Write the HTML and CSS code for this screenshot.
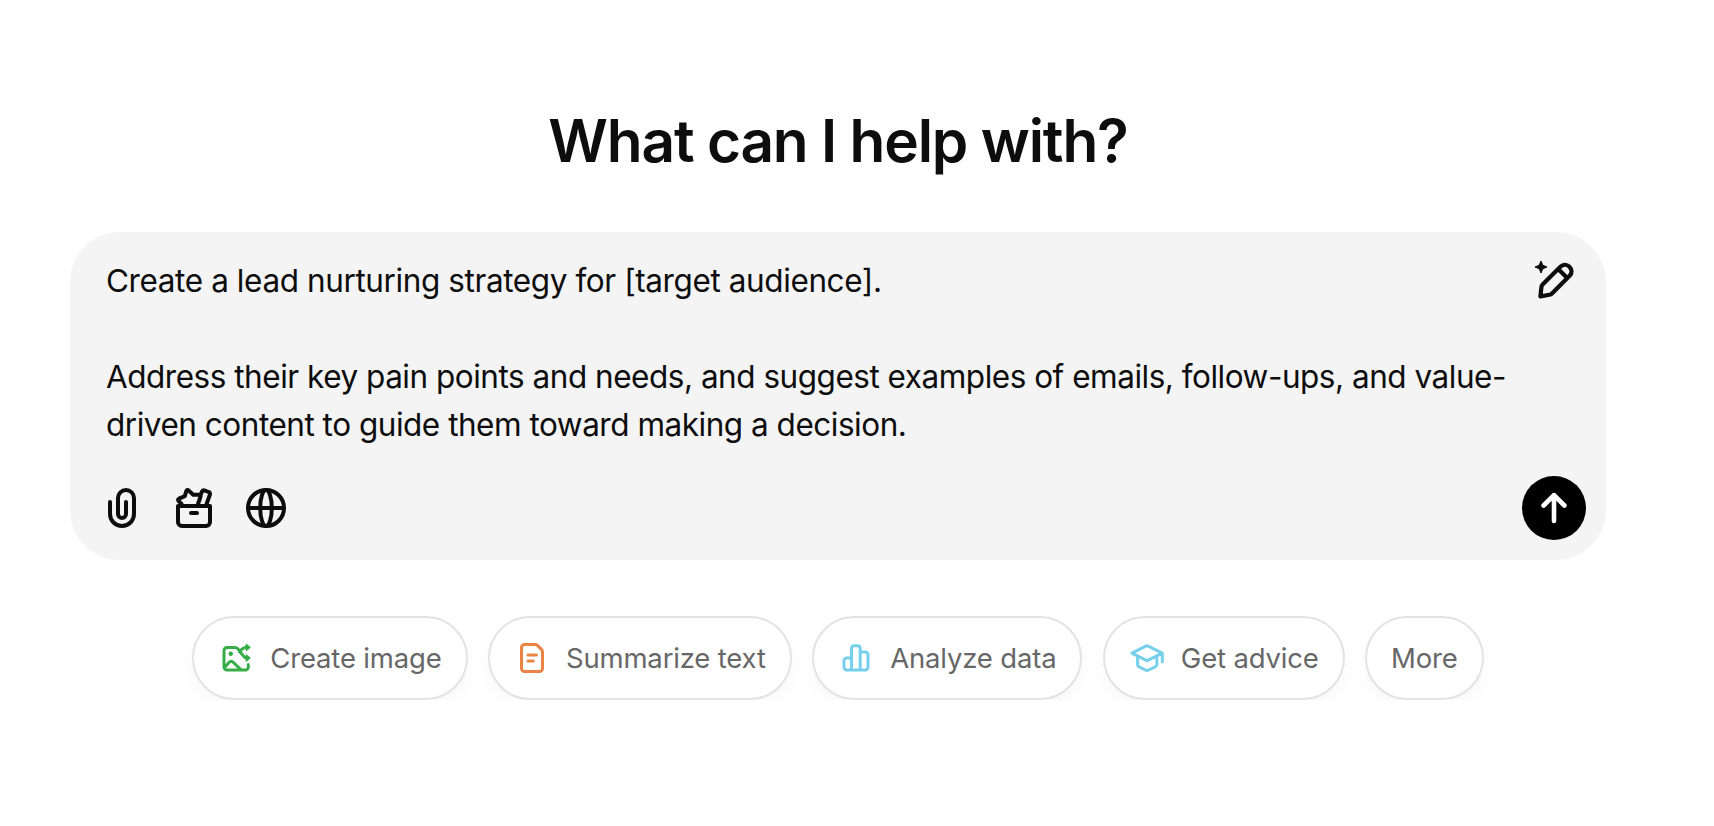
FILE: index.html
```html
<!DOCTYPE html>
<html lang="en">
<head>
    <meta charset="UTF-8">
    <meta name="viewport" content="width=device-width, initial-scale=1.0">
    <title>What can I help with?</title>
    <link rel="stylesheet" href="styles.css">
</head>
<body>
    <main class="wrapper">
        <h1 class="title">What can I help with?</h1>

        <div class="composer">
            <div class="prompt-row">
                <div class="prompt">
                    <p class="intro">Create a lead nurturing strategy for [target audience].</p>
                    <p>Address their key pain points and needs, and suggest examples of emails, follow-ups, and value-<br>driven content to guide them toward making a decision.</p>
                </div>
                <button type="button" class="icon-btn edit-btn" aria-label="Improve prompt">
                    <svg viewBox="0 0 48 48">
                        <path class="fill spark" d="M11 5L12.8 9.2L17 11L12.8 12.8L11 17L9.2 12.8L5 11L9.2 9.2Z"/>
                        <path class="line thick" d="M12.8 28.3L30.4 10.7C33.2 7.9 36.9 8.3 39.2 10.6C42.2 13.4 42.3 17.1 39.6 19.8L22 37.4C21.3 38.1 20.4 38.6 19.4 38.8L10.4 40.4L11.4 31.2C11.5 30.1 12 29.1 12.8 28.3ZM28.4 13.2L37 21.8"/>
                    </svg>
                </button>
            </div>

            <div class="toolbar">
                <div class="tools">
                    <button type="button" class="icon-btn" aria-label="Attach file">
                        <svg viewBox="0 0 24 24">
                            <path class="line" d="M6 9V15A6 6 0 0 0 18 15V7A4 4 0 0 0 10 7V15A2 2 0 0 0 14 15V9"/>
                        </svg>
                    </button>
                    <button type="button" class="icon-btn" aria-label="Toolbox">
                        <svg viewBox="0 0 24 24">
                            <path class="line" d="M4 11H20V19A2 2 0 0 1 18 21H6A2 2 0 0 1 4 19ZM10.5 14.5H13.5"/>
                            <path class="line" d="M5.8 10L4.2 8.4C3.9 8 4 7.6 4.5 7.3L7.4 6.1L8.1 3.7C8.3 2.9 8.9 2.8 9.4 3.3L11.6 5.4L14.4 5.4C15.3 5.4 15.6 5.9 15.2 6.5L14 10M15.3 5.4L16 3.8C16.2 3.2 16.6 3 17.2 3.2L19.3 4C19.9 4.2 20.2 4.8 19.9 5.4L18.3 10"/>
                        </svg>
                    </button>
                    <button type="button" class="icon-btn" aria-label="Search the web">
                        <svg viewBox="0 0 24 24">
                            <path class="line" d="M21 12A9 9 0 1 1 3 12A9 9 0 1 1 21 12ZM3 12H21"/>
                            <ellipse class="line" cx="12" cy="12" rx="2.9" ry="9"/>
                        </svg>
                    </button>
                </div>
                <button type="button" class="send-btn" aria-label="Send">
                    <svg viewBox="0 0 64 64">
                        <path class="line" d="M32 45V19M21.6 29.5L32 19.1L42.4 29.5"/>
                    </svg>
                </button>
            </div>
        </div>

        <div class="chips">
            <button type="button" class="chip">
                <svg class="green" viewBox="0 0 24 24">
                    <path class="line" d="M20.2 16.4V18A2 2 0 0 1 18.2 20H6A2 2 0 0 1 4 18V7A2 2 0 0 1 6 5H11.3C12.2 5 12.7 5.3 13.2 5.8L16.6 10.2C17.3 11.2 18 11.9 19.2 12M14.4 8C15.6 6.2 17 5 19.2 4.9M4.2 18.6L7.4 14.9C8.2 14 9.2 14 10 14.8L15.6 20"/>
                    <path class="fill arrows" d="M18.9 3.1L21.2 4.9L18.9 6.8ZM18.9 10.1L21.2 12L18.9 13.9Z"/>
                    <circle class="fill" cx="8.5" cy="9.2" r="1.5"/>
                </svg>
                Create image
            </button>
            <button type="button" class="chip">
                <svg class="orange" viewBox="0 0 24 24">
                    <path class="line" d="M7 3H14.2C14.7 3 15.2 3.2 15.6 3.6L18.4 6.4C18.8 6.8 19 7.3 19 7.8V19A2 2 0 0 1 17 21H7A2 2 0 0 1 5 19V5A2 2 0 0 1 7 3ZM9.3 10H15M9.3 14H12.8"/>
                </svg>
                Summarize text
            </button>
            <button type="button" class="chip">
                <svg class="blue" viewBox="0 0 24 24">
                    <path class="line" d="M9 20V5.5A1.8 1.8 0 0 1 10.8 3.8H13A1.8 1.8 0 0 1 14.8 5.5V20M9 12H5.8A1.8 1.8 0 0 0 4 13.8V18.2A1.8 1.8 0 0 0 5.8 20H18.2A1.8 1.8 0 0 0 20 18.2V9.8A1.8 1.8 0 0 0 18.2 8H14.8"/>
                </svg>
                Analyze data
            </button>
            <button type="button" class="chip">
                <svg class="blue" viewBox="0 0 24 24">
                    <path class="line" d="M2 8.7L11.2 4.1C11.7 3.8 12.3 3.8 12.8 4.1L22.2 8.7L12.8 13.4C12.3 13.7 11.7 13.7 11.2 13.4ZM5.7 10.8V16.4C5.7 16.9 6 17.4 6.4 17.7L11 20C11.7 20.4 12.3 20.4 13 20L17.8 17.7C18.3 17.4 18.6 16.9 18.6 16.4V10.8M22.2 8.9V14.5"/>
                </svg>
                Get advice
            </button>
            <button type="button" class="chip">More</button>
        </div>
    </main>
</body>
</html>
```

FILE: styles.css
```css
*{
    box-sizing: border-box;
    margin: 0;
    padding: 0;
}
body{
    background-color: #fff;
    color: #0d0d0d;
    font-family: Inter, "Liberation Sans", sans-serif;
}
button{
    border: none;
    background: none;
    color: inherit;
    font: inherit;
    cursor: pointer;
}
svg{
    display: block;
    flex: none;
}
.line{
    fill: none;
    stroke: currentColor;
    stroke-width: 2;
    stroke-linecap: round;
    stroke-linejoin: round;
}
.thick{
    stroke-width: 4.2;
}
.fill{
    fill: currentColor;
}
.spark, .arrows{
    stroke: currentColor;
    stroke-width: 1;
    stroke-linejoin: round;
}
.wrapper{
    width: 1536px;
    margin-left: 70px;
    padding-top: 105px;
}
.title{
    height: 72px;
    line-height: 72px;
    font-size: 58.5px;
    font-weight: 600;
    letter-spacing: -1.17px;
    text-align: center;
}

/* input box */
.composer{
    height: 328px;
    margin-top: 55px;
    padding: 24px 20px 20px 36px;
    border-radius: 50px;
    background-color: #f4f4f4;
    display: flex;
    flex-direction: column;
    justify-content: space-between;
}
.prompt-row{
    display: flex;
    justify-content: space-between;
}
.prompt{
    padding-top: 1px;
    font-size: 31.5px;
    line-height: 48px;
    letter-spacing: -0.48px;
    white-space: nowrap;
}
.prompt .intro{
    letter-spacing: -0.4px;
}
.prompt p + p{
    margin-top: 48px;
}
.icon-btn, .icon-btn svg{
    width: 48px;
    height: 48px;
}
.edit-btn{
    margin-right: 8px;
}
.toolbar{
    display: flex;
    justify-content: space-between;
    align-items: center;
}
.tools{
    display: flex;
    gap: 24px;
    margin-left: -8px;
}
.send-btn{
    width: 64px;
    height: 64px;
    border-radius: 50%;
    background-color: #000;
    color: #fff;
}
.send-btn .line{
    stroke-width: 4.6;
}

/* suggestions */
.chips{
    display: flex;
    justify-content: center;
    gap: 20.4px;
    margin-top: 56px;
}
.chip{
    display: flex;
    align-items: center;
    gap: 16px;
    height: 84px;
    padding: 0 24px;
    border: 2px solid #e3e3e3;
    border-radius: 42px;
    background-color: #fff;
    box-shadow: 0 8px 16px rgba(0, 0, 0, 0.03);
    color: #676767;
    font-size: 27.5px;
    letter-spacing: -0.17px;
    white-space: nowrap;
}
.chip svg{
    width: 36px;
    height: 36px;
}
.green{
    color: #35ae47;
}
.orange{
    color: #ea8444;
}
.blue{
    color: #76d0eb;
}
```
